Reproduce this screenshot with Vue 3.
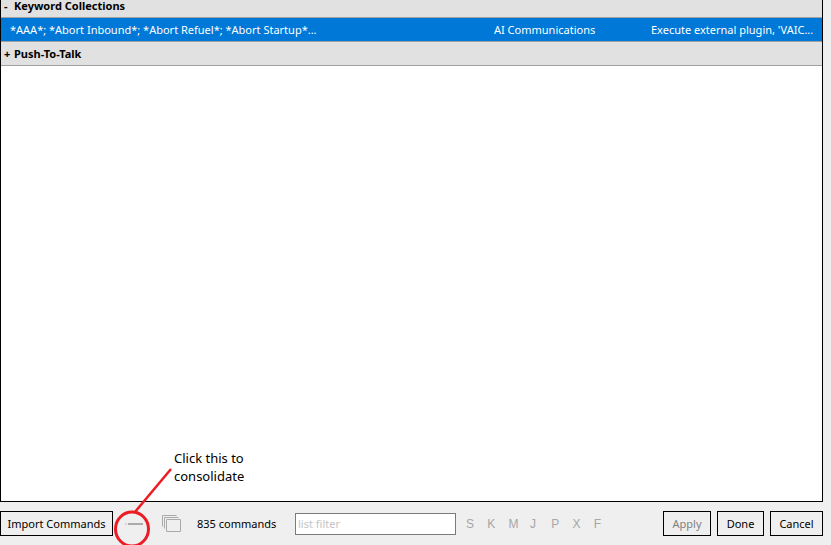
<script setup>
const letters = ['S', 'K', 'M', 'J', 'P', 'X', 'F']
</script>

<template>
  <div class="page">
    <div class="main">
      <div class="list">
        <div class="group"><span class="sign">-</span>Keyword Collections</div>
        <div class="row">
          <span class="c1">*AAA*; *Abort Inbound*; *Abort Refuel*; *Abort Startup*...</span>
          <span class="c2">AI Communications</span>
          <span class="c3">Execute external plugin, 'VAIC...</span>
        </div>
        <div class="group tall"><span class="sign">+</span>Push-To-Talk</div>
      </div>
    </div>
    <div class="bar">
      <button class="btn import">Import Commands</button>
      <div class="icons">
        <svg width="22" height="4" viewBox="0 0 22 4" class="dash">
          <rect x="0" y="1" width="2" height="2" fill="#d4d4d4" />
          <rect x="3" y="1" width="15" height="2" fill="#aaaaaa" />
        </svg>
        <svg width="20" height="18" viewBox="0 0 20 18" class="stack">
          <path d="M.5 11.5V.5h14M2.500 13.500V2.500h14M4.500 4.500h14v12h-14z" fill="none" stroke="#aaaaaa" />
        </svg>
      </div>
      <span class="count">835 commands</span>
      <input class="filter" placeholder="list filter" />
      <div class="letters"><span v-for="l in letters" :key="l">{{ l }}</span></div>
      <div class="actions">
        <button class="btn apply">Apply</button>
        <button class="btn done">Done</button>
        <button class="btn cancel">Cancel</button>
      </div>
    </div>
    <div class="note">Click this to<br />consolidate</div>
    <svg class="mark" width="70" height="80" viewBox="0 0 70 80">
      <path d="M57 3 21 46" fill="none" stroke="#ec1c24" stroke-width="2.500" />
      <ellipse cx="18" cy="63" rx="16.500" ry="17" fill="none" stroke="#ec1c24" stroke-width="3" />
    </svg>
  </div>
</template>

<style>
html, body { margin: 0; background: #efefef; }
</style>

<style scoped>
.page {
  position: relative;
  width: 831px;
  height: 545px;
  overflow: hidden;
  display: flex;
  flex-direction: column;
  background: #efefef;
  font-family: "Noto Sans", "Open Sans", sans-serif;
  font-size: 11px;
  color: #000;
}
.main {
  width: 821px;
  height: 501px;
  border: 1px solid #000;
  border-top: 0;
  background: #fff;
  flex: none;
}
.group {
  height: 17px;
  line-height: 12px;
  background: #e1e1e1;
  border-bottom: 1px solid #a0a0a0;
  font-weight: 700;
  padding-left: 3px;
  display: flex;
}
.group.tall { height: 23px; line-height: 24px; }
.sign { width: 7px; margin-right: 3px; }
.row {
  height: 23px;
  line-height: 23px;
  background: #0078d7;
  border-bottom: 1px solid #a0a0a0;
  color: #fff;
  display: flex;
  white-space: nowrap;
}
.c1 { width: 484px; padding-left: 9px; box-sizing: border-box; margin-right: 9px; }
.c2 { width: 157px; }
.c3 { width: 170px; }
.bar {
  flex: 1;
  display: flex;
  align-items: center;
  padding-top: 0;
  position: relative;
}
.btn {
  height: 25px;
  box-sizing: border-box;
  border: 1px solid #000;
  background: #efefef;
  font: inherit;
  padding: 0;
  color: #000;
  margin: 0;
}
.import { width: 113px; }
.icons { display: flex; align-items: center; margin-left: 12px; }
.dash { margin-right: 15px; }
.stack { margin-top: 1px; }
.count { margin-left: 15px; width: 98px; white-space: nowrap; }
.filter {
  width: 161px;
  height: 22px;
  box-sizing: border-box;
  border: 1px solid #7a7a7a;
  background: #fff;
  padding: 0 2px;
  font: inherit;
  outline: none;
}
.filter::placeholder { color: #c4c4c4; opacity: 1; }
.letters {
  display: flex;
  margin-left: 10px;
  font-family: "Liberation Sans", Arial, sans-serif;
  font-size: 12px;
  color: #a6a6a6;
}
.letters span { width: 21.300px; }
.actions {
  margin-left: auto;
  margin-right: 8px;
  display: flex;
  gap: 6px;
}
.apply { width: 48px; color: #7f7f7f; }
.done { width: 47px; }
.cancel { width: 53px; }
.note {
  position: absolute;
  left: 174px;
  top: 449px;
  font-size: 13px;
  line-height: 18px;
  white-space: nowrap;
}
.mark {
  position: absolute;
  left: 114px;
  top: 466px;
  pointer-events: none;
}
</style>
